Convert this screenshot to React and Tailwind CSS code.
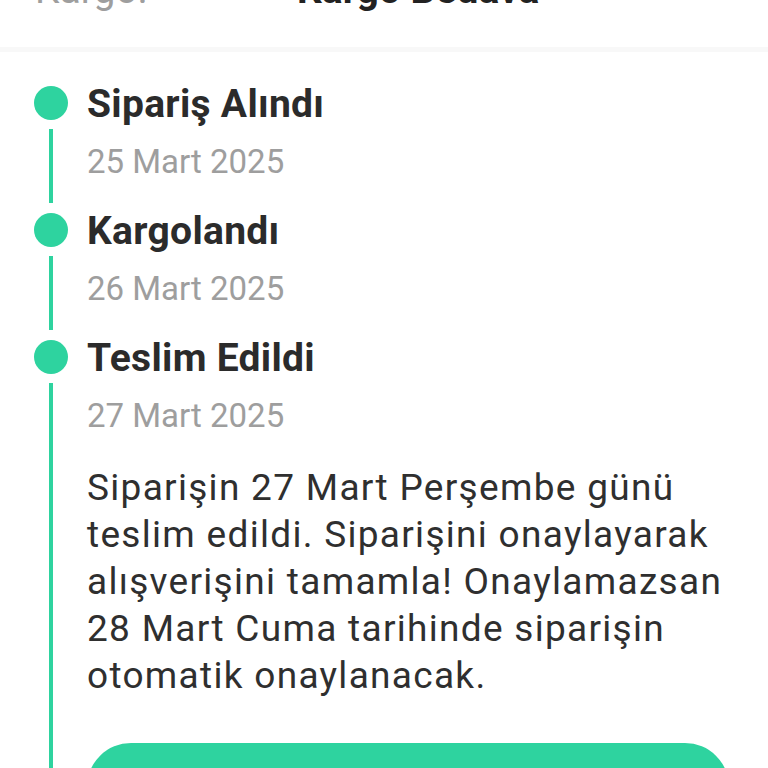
import React from "react";

const steps = [
  { title: "Sipariş Alındı", date: "25 Mart 2025" },
  { title: "Kargolandı", date: "26 Mart 2025" },
  { title: "Teslim Edildi", date: "27 Mart 2025", last: true },
];

function Step({ title, date, last }) {
  return (
    <div className={last ? "flex flex-1" : "flex h-[127px]"}>
      <div className="flex w-[34px] flex-col items-center">
        <div className="h-[34px] w-[34px] shrink-0 rounded-full bg-[#2ed39f]" />
        <div className={last ? "mt-[9px] w-[4px] flex-1 bg-[#2ed39f]" : "mb-[10px] mt-[9px] w-[4px] flex-1 bg-[#2ed39f]"} />
      </div>
      <div className="ml-[19px] flex flex-1 flex-col pr-[38px]">
        <div className="mt-[1px] text-[39px] font-bold leading-[34px] tracking-[0.3px] text-[#2b2b2b]">{title}</div>
        <div className="mt-[21px] text-[33px] leading-[40px] text-[#9e9e9e]">{date}</div>
        {last && (
          <>
            <p className="mt-[28px] text-[37px] leading-[47px] tracking-[1.3px] text-[#2f2f2f]">
              Siparişin 27 Mart Perşembe günü teslim edildi. Siparişini onaylayarak alışverişini tamamla! Onaylamazsan 28 Mart Cuma tarihinde siparişin otomatik onaylanacak.
            </p>
            <button className="mt-[44px] flex h-[100px] w-[642px] items-center justify-center rounded-[44px] bg-[#2ed39f] text-[36px] font-bold text-white">
              Siparişi Onayla
            </button>
          </>
        )}
      </div>
    </div>
  );
}

export default function App() {
  return (
    <div
      className="flex h-[768px] w-[768px] flex-col overflow-hidden bg-white"
      style={{ fontFamily: "Roboto, 'Noto Sans', sans-serif" }}
    >
      <div className="h-[47px] shrink-0">
        <div className="-mt-[29px] flex pl-[35px] text-[39px] leading-[39px]">
          <span className="w-[262px] text-[#9e9e9e]">Kargo:</span>
          <span className="font-bold text-[#222]">Kargo Bedava</span>
        </div>
      </div>
      <div className="h-[5px] shrink-0 bg-[#f8f8f8]" />
      <div className="flex flex-1 flex-col pl-[34px] pt-[34px]">
        {steps.map((s) => (
          <Step key={s.title} {...s} />
        ))}
      </div>
    </div>
  );
}
